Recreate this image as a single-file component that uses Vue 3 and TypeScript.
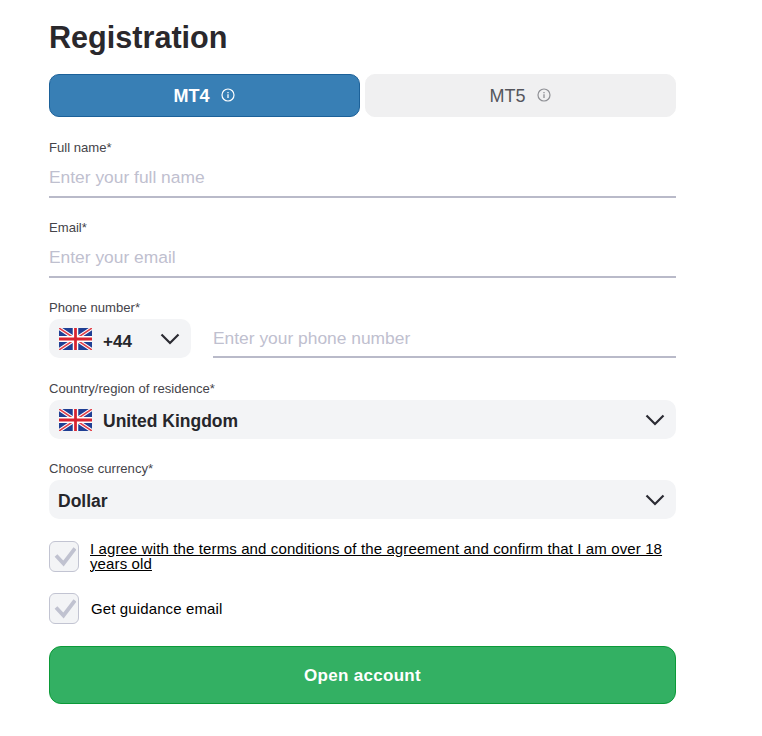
<script setup lang="ts">
const fields = [
  { label: 'Full name*', placeholder: 'Enter your full name' },
  { label: 'Email*', placeholder: 'Enter your email' },
]
</script>

<template>
  <main class="page">
    <h1 class="title">Registration</h1>
    <div class="tabs">
      <button class="tab active" type="button">
        <span>MT4</span>
        <svg class="info" viewBox="0 0 14 14" fill="none" stroke="currentColor">
          <circle cx="7" cy="7" r="6" stroke-width="1.2" />
          <path d="M7 6.3v3.6" stroke-width="1.3" />
          <path d="M7 4v1.3" stroke-width="1.3" />
        </svg>
      </button>
      <button class="tab" type="button">
        <span>MT5</span>
        <svg class="info" viewBox="0 0 14 14" fill="none" stroke="currentColor">
          <circle cx="7" cy="7" r="6" stroke-width="1.2" />
          <path d="M7 6.3v3.6" stroke-width="1.3" />
          <path d="M7 4v1.3" stroke-width="1.3" />
        </svg>
      </button>
    </div>

    <div v-for="f in fields" :key="f.label" class="field">
      <label class="label">{{ f.label }}</label>
      <input class="input" :placeholder="f.placeholder" />
    </div>

    <div class="field phone-field">
      <label class="label">Phone number*</label>
      <div class="phone-row">
        <div class="select code">
          <svg class="flag" viewBox="0 0 60 36" preserveAspectRatio="none">
            <rect width="60" height="36" fill="#1f3f94" />
            <path d="M0 0L60 36M60 0L0 36" stroke="#fff" stroke-width="6" />
            <path d="M0 0L60 36M60 0L0 36" stroke="#e0404a" stroke-width="2.6" />
            <path d="M30 0V36M0 18H60" stroke="#fff" stroke-width="10" />
            <path d="M30 0V36M0 18H60" stroke="#d8232f" stroke-width="5" />
          </svg>
          <span class="value code-value">+44</span>
          <svg class="chev" viewBox="0 0 20 12" fill="none" stroke="#2b2b33" stroke-width="2.2">
            <path d="M1.5 1.5L10 10L18.5 1.5" />
          </svg>
        </div>
        <input class="input phone-input" placeholder="Enter your phone number" />
      </div>
    </div>

    <div class="field country-field">
      <label class="label">Country/region of residence*</label>
      <div class="select">
        <svg class="flag" viewBox="0 0 60 36" preserveAspectRatio="none">
          <rect width="60" height="36" fill="#1f3f94" />
          <path d="M0 0L60 36M60 0L0 36" stroke="#fff" stroke-width="6" />
          <path d="M0 0L60 36M60 0L0 36" stroke="#e0404a" stroke-width="2.6" />
          <path d="M30 0V36M0 18H60" stroke="#fff" stroke-width="10" />
          <path d="M30 0V36M0 18H60" stroke="#d8232f" stroke-width="5" />
        </svg>
        <span class="value">United Kingdom</span>
        <svg class="chev" viewBox="0 0 20 12" fill="none" stroke="#2b2b33" stroke-width="2.2">
          <path d="M1.5 1.5L10 10L18.5 1.5" />
        </svg>
      </div>
    </div>

    <div class="field currency-field">
      <label class="label">Choose currency*</label>
      <div class="select plain">
        <span class="value">Dollar</span>
        <svg class="chev" viewBox="0 0 20 12" fill="none" stroke="#2b2b33" stroke-width="2.2">
          <path d="M1.5 1.5L10 10L18.5 1.5" />
        </svg>
      </div>
    </div>

    <div class="check-row first">
      <span class="box">
        <svg viewBox="0 0 24 24" fill="none" stroke="#c0c2d0" stroke-width="3.8">
          <path d="M4 10.5L11.5 18.5L23 3.5" />
        </svg>
      </span>
      <a class="agree">I agree with the terms and conditions of the agreement and confirm that I am over 18 years old</a>
    </div>
    <div class="check-row second">
      <span class="box">
        <svg viewBox="0 0 24 24" fill="none" stroke="#c0c2d0" stroke-width="3.8">
          <path d="M4 10.5L11.5 18.5L23 3.5" />
        </svg>
      </span>
      <span class="guidance">Get guidance email</span>
    </div>

    <button class="submit" type="button">Open account</button>
  </main>
</template>

<style scoped>
.page {
  width: 627px;
  margin-left: 49px;
  padding-top: 17px;
  font-family: "Liberation Sans", Arial, sans-serif;
  color: #26262b;
}
.title {
  margin: 0;
  font-size: 30.6px;
  line-height: 40px;
  font-weight: 700;
  color: #2a282c;
}
.tabs {
  display: flex;
  gap: 5px;
  margin-top: 17px;
}
.tab {
  flex: 1;
  height: 43px;
  display: flex;
  align-items: center;
  justify-content: center;
  gap: 11px;
  border: 1px solid #f0f0f1;
  border-radius: 10px;
  background: #f0f0f1;
  color: #55565c;
  font-family: "Liberation Sans", Arial, sans-serif;
  font-size: 18px;
  padding: 1px 1px 0 0;
}
.tab .info {
  width: 14px;
  height: 14px;
  margin-top: -2px;
  color: #8f9095;
}
.tab.active {
  background: #387fb5;
  border-color: #1c6199;
  color: #fff;
  font-weight: 700;
}
.tab.active .info {
  color: #fff;
}
.field {
  display: flex;
  flex-direction: column;
  margin-top: 23px;
}
.field + .field {
  margin-top: 22px;
}
.field + .country-field {
  margin-top: 23px;
}
.field + .currency-field {
  margin-top: 22px;
}
.label {
  font-family: "Liberation Sans", Arial, sans-serif;
  font-size: 13.1px;
  line-height: 16px;
  color: #45444a;
}
.input {
  box-sizing: border-box;
  width: 100%;
  border: 0;
  border-bottom: 2px solid #b9bac9;
  background: transparent;
  padding: 2px 0 0;
  outline: none;
  font-family: "Liberation Sans", Arial, sans-serif;
  font-size: 17.4px;
}
.field > .input {
  height: 42px;
  padding-top: 3px;
}
.input::placeholder {
  color: #bfc0cf;
  opacity: 1;
}
.phone-row {
  display: flex;
  gap: 22px;
  margin-top: 3px;
}
.phone-input {
  flex: 1;
  width: auto;
  height: 39px;
}
.select {
  box-sizing: border-box;
  height: 39px;
  display: flex;
  align-items: center;
  padding: 0 11px 0 10px;
  background: #f3f4f6;
  border-radius: 10px;
}
.country-field .select,
.currency-field .select {
  margin-top: 3px;
}
.select.plain {
  padding-left: 9px;
}
.select.code {
  width: 142px;
  flex: none;
}
.flag {
  width: 33px;
  height: 22px;
  margin-right: 11px;
  flex: none;
}
.value {
  flex: 1;
  padding-top: 4px;
  font-size: 17.5px;
  font-weight: 700;
  color: #26262b;
}
.code-value {
  padding-top: 6px;
  font-size: 17px;
}
.chev {
  width: 20px;
  height: 12px;
  flex: none;
}
.check-row {
  display: flex;
  align-items: center;
  gap: 11px;
  color: #000;
  font-size: 15px;
  letter-spacing: 0.12px;
}
.check-row.first {
  margin-top: 22px;
}
.check-row.second {
  margin-top: 21px;
}
.box {
  box-sizing: border-box;
  flex: none;
  width: 30px;
  height: 31px;
  border: 1px solid #c2c4d2;
  border-radius: 6px;
  background: #f3f4f6;
  display: flex;
  align-items: center;
  justify-content: center;
}
.box svg {
  width: 24px;
  height: 24px;
}
.agree {
  text-decoration: underline;
  line-height: 15px;
  margin-top: -2px;
}
.guidance {
  margin-left: 1px;
}
.submit {
  display: block;
  width: 100%;
  height: 58px;
  margin-top: 22px;
  padding-top: 2px;
  border: 1px solid #0b9a38;
  border-radius: 12px;
  background: #33b063;
  color: #fff;
  font-family: "Liberation Sans", Arial, sans-serif;
  font-size: 17px;
  letter-spacing: 0.3px;
  font-weight: 700;
}
</style>
